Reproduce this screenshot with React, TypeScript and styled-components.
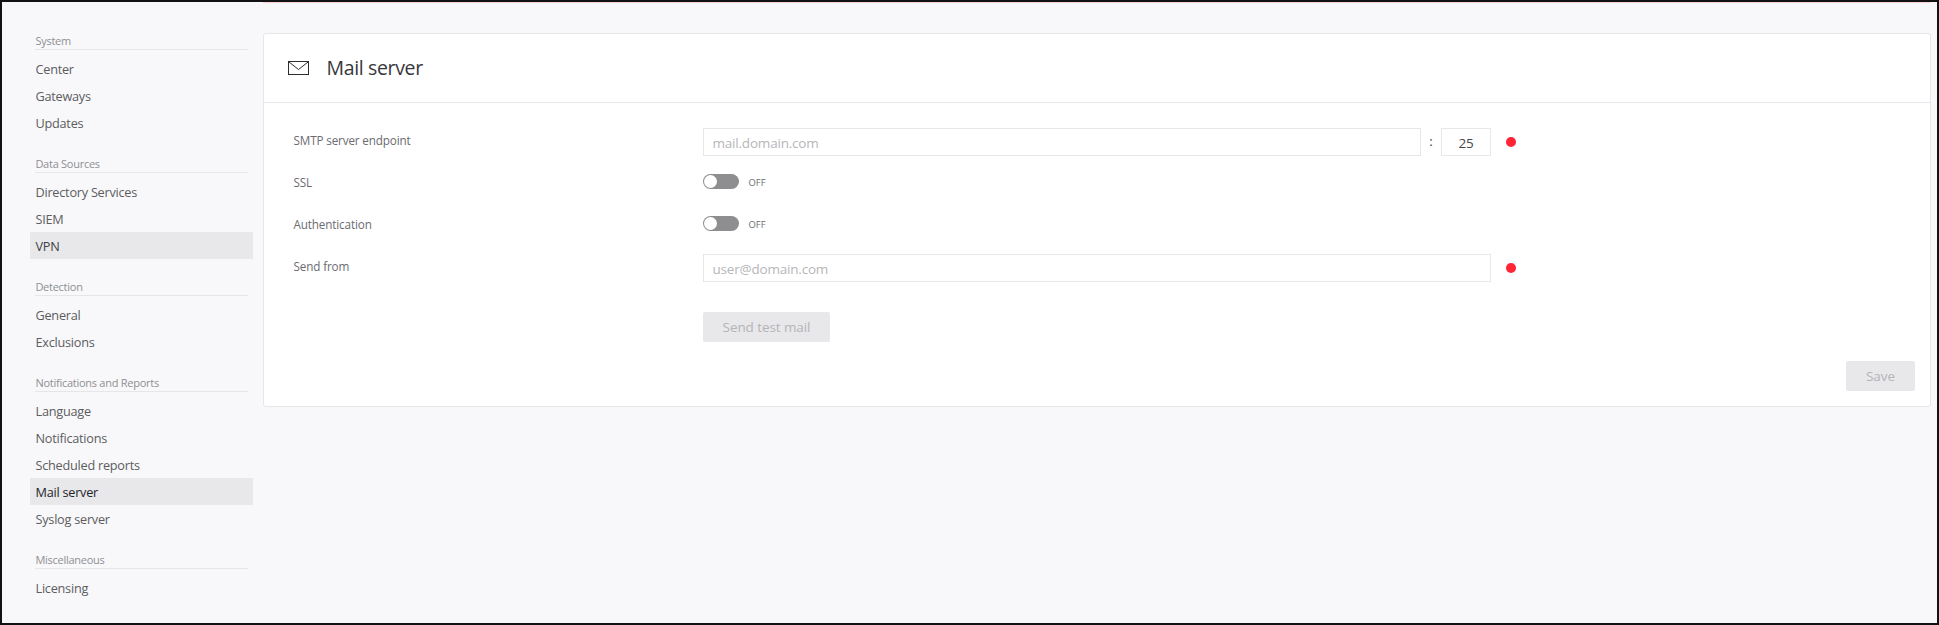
import React from "react";
import styled, { createGlobalStyle } from "styled-components";

const GlobalStyle = createGlobalStyle`
  * { box-sizing: border-box; }
  body {
    margin: 0;
    font-family: "Open Sans", "Noto Sans", sans-serif;
    color: #5c5c60;
  }
`;

const Page = styled.div`
  display: flex;
  align-items: flex-start;
  width: 1939px;
  height: 625px;
  border: 2px solid #121214;
  background: #f8f8fa;
`;

const Sidebar = styled.nav`
  flex: none;
  width: 261px;
  padding: 11px 10px 0 28px;
`;

const Group = styled.section`
  display: flex;
  flex-direction: column;
`;

const GroupTitle = styled.h2`
  height: 37px;
  margin: 0 5px 5px;
  padding-top: 20px;
  border-bottom: 1px solid #e6e6e9;
  font-size: 11px;
  font-weight: 400;
  line-height: 16px;
  letter-spacing: -0.26px;
  text-indent: 0.4px;
  color: #8f8f93;
`;

const NavItem = styled.a<{ $filled?: boolean; $current?: boolean }>`
  height: 27px;
  padding-left: 5.5px;
  font-size: 12.7px;
  line-height: 28px;
  letter-spacing: -0.24px;
  color: ${(p) => (p.$current ? "#242429" : p.$filled ? "#404046" : "#5c5c60")};
  background: ${(p) => (p.$filled ? "#e8e8ea" : "transparent")};
`;

const Main = styled.main`
  width: 1668px;
  border-top: 1px solid #ffcfcf;
`;

const Card = styled.section`
  height: 374px;
  margin-top: 30px;
  border: 1px solid #e7e7ea;
  border-radius: 3px;
  background: #fff;
`;

const CardHeader = styled.header`
  display: flex;
  align-items: center;
  height: 69px;
  padding-left: 24px;
  border-bottom: 1px solid #e7e7ea;
`;

const Title = styled.h1`
  margin: 0 0 0 17.5px;
  font-size: 19.5px;
  font-weight: 400;
  line-height: 28px;
  letter-spacing: -0.35px;
  color: #37373c;
`;

const Form = styled.div`
  padding: 18px 0 0 29px;
`;

const Row = styled.div`
  display: flex;
  height: 42px;
`;

const Label = styled.label`
  width: 410px;
  padding: 10px 0 0 0.5px;
  font-size: 11.7px;
  line-height: 18px;
  letter-spacing: -0.14px;
  color: #6b6b70;
`;

const TextInput = styled.input<{ $width: number; $centered?: boolean }>`
  width: ${(p) => p.$width}px;
  height: 28px;
  margin: 7px 0 0;
  padding: ${(p) => (p.$centered ? "1px 0 0" : "1px 9px 0 8.5px")};
  border: 1px solid #e7e7ea;
  border-radius: 0;
  outline: none;
  background: #fff;
  font-family: inherit;
  font-size: 13.5px;
  letter-spacing: -0.2px;
  text-align: ${(p) => (p.$centered ? "center" : "left")};
  color: #46464c;
  &::placeholder { color: #b6b6ba; opacity: 1; }
`;

const Colon = styled.span`
  width: 20px;
  padding-top: 10px;
  font-size: 13.5px;
  line-height: 20px;
  text-align: center;
  color: #46464c;
`;

const RequiredDot = styled.span`
  width: 10px;
  height: 10px;
  margin: 16px 0 0 15px;
  border-radius: 50%;
  background: #ff2534;
`;

const Toggle = styled.button`
  width: 36px;
  height: 15px;
  margin: 11px 0 0;
  padding: 1px;
  border: 0;
  border-radius: 8px;
  background: #8e8e91;
`;

const Knob = styled.span`
  display: block;
  width: 13px;
  height: 13px;
  border-radius: 50%;
  background: #fff;
`;

const ToggleState = styled.span`
  margin-left: 9.5px;
  padding-top: 12px;
  font-size: 9.4px;
  line-height: 15px;
  color: #6b6b70;
`;

const Button = styled.button<{ $width: number }>`
  width: ${(p) => p.$width}px;
  height: 30px;
  padding: 0;
  border: 0;
  border-radius: 2px;
  background: #e8e8ea;
  font-family: inherit;
  font-size: 13.5px;
  letter-spacing: -0.08px;
  color: #b4b4b8;
`;

const TestRow = styled.div`
  padding: 23px 0 0 410px;
  line-height: 0;
`;

const Footer = styled.footer`
  display: flex;
  justify-content: flex-end;
  padding: 19px 15px 0 0;
`;

const groups = [
  { title: "System", items: ["Center", "Gateways", "Updates"] },
  { title: "Data Sources", items: ["Directory Services", "SIEM", "VPN"] },
  { title: "Detection", items: ["General", "Exclusions"] },
  {
    title: "Notifications and Reports",
    items: ["Language", "Notifications", "Scheduled reports", "Mail server", "Syslog server"],
  },
  { title: "Miscellaneous", items: ["Licensing"] },
];

const current = "Mail server";
const hovered = "VPN";

const MailIcon = () => (
  <svg width="21" height="14" viewBox="0 0 21 14" fill="none" stroke="#2c2c30">
    <rect x="0.5" y="0.5" width="20" height="13" />
    <path d="M1 1L10.5 8.5L20 1" />
  </svg>
);

const Switch = () => (
  <>
    <Toggle type="button" role="switch" aria-checked={false}>
      <Knob />
    </Toggle>
    <ToggleState>OFF</ToggleState>
  </>
);

export default function App() {
  return (
    <Page>
      <GlobalStyle />
      <Sidebar>
        {groups.map((group) => (
          <Group key={group.title}>
            <GroupTitle>{group.title}</GroupTitle>
            {group.items.map((item) => (
              <NavItem
                key={item}
                $current={item === current}
                $filled={item === current || item === hovered}
              >
                {item}
              </NavItem>
            ))}
          </Group>
        ))}
      </Sidebar>
      <Main>
        <Card>
          <CardHeader>
            <MailIcon />
            <Title>Mail server</Title>
          </CardHeader>
          <Form>
            <Row>
              <Label>SMTP server endpoint</Label>
              <TextInput $width={718} placeholder="mail.domain.com" />
              <Colon>:</Colon>
              <TextInput $width={50} $centered defaultValue="25" />
              <RequiredDot />
            </Row>
            <Row>
              <Label>SSL</Label>
              <Switch />
            </Row>
            <Row>
              <Label>Authentication</Label>
              <Switch />
            </Row>
            <Row>
              <Label>Send from</Label>
              <TextInput $width={788} placeholder="user@domain.com" />
              <RequiredDot />
            </Row>
            <TestRow>
              <Button $width={127} disabled>Send test mail</Button>
            </TestRow>
            <Footer>
              <Button $width={69} disabled>Save</Button>
            </Footer>
          </Form>
        </Card>
      </Main>
    </Page>
  );
}
